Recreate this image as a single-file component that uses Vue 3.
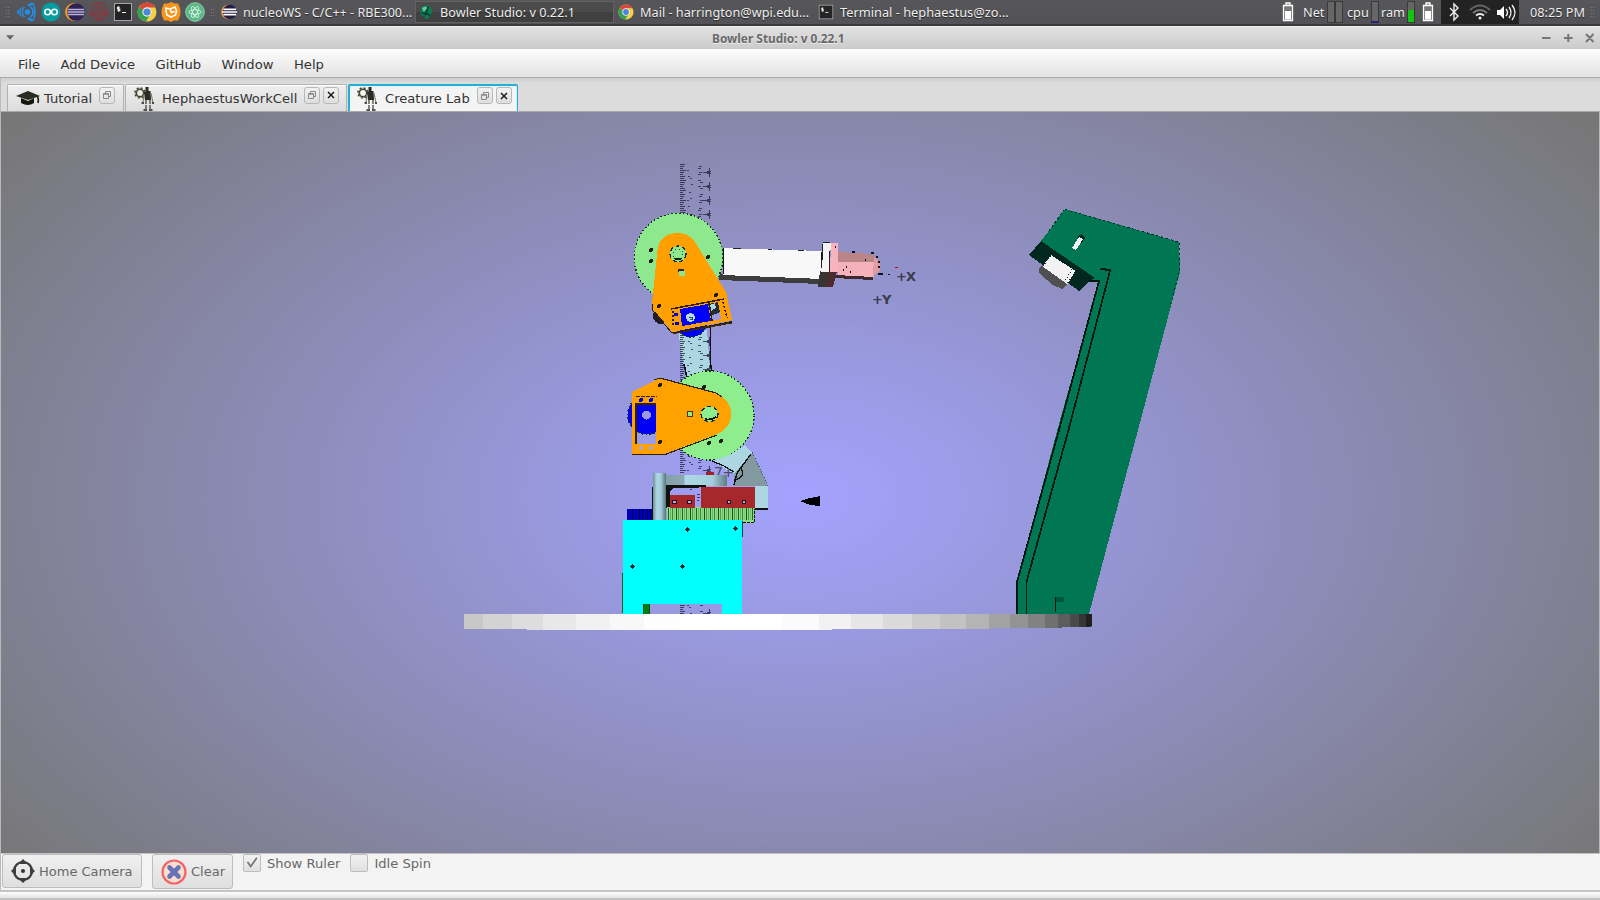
<script setup>
const tasks = [
  { label: 'nucleoWS - C/C++ - RBE300...', icon: 'eclipse' },
  { label: 'Bowler Studio: v 0.22.1', icon: 'bowler', active: true },
  { label: 'Mail - harrington@wpi.edu...', icon: 'chrome' },
  { label: 'Terminal - hephaestus@zo...', icon: 'term' }
]
const menus = ['File', 'Add Device', 'GitHub', 'Window', 'Help']
const tabs = [
  { label: 'Tutorial', w: 117, icon: 'cap' },
  { label: 'HephaestusWorkCell', w: 222, icon: 'robot', close: true },
  { label: 'Creature Lab', w: 170, icon: 'robot', close: true, active: true }
]
const edges = [464, 483, 512, 543, 576, 610, 644, 680, 715, 749, 782, 819, 851, 883, 912, 940, 966, 989, 1010, 1028, 1045, 1058, 1070, 1079, 1086, 1092]
const shades = [200, 211, 221, 232, 241, 248, 253, 255, 255, 255, 251, 242, 230, 218, 205, 194, 180, 163, 147, 130, 112, 93, 74, 54, 32]
const disc = shades.map((s, i) => ({ x: edges[i], w: edges[i + 1] - edges[i], fill: `rgb(${s},${s},${s})` }))
function ruler(y0, y1) {
  let fine = '', mid = '', major = ''
  for (let y = y0; y < y1; y += 2) {
    fine += `M680 ${y}h${y % 10 === 0 ? 6 : 3 + (y % 3)}`
    if ((y * 7) % 11 < 4) mid += `M${687 + (y % 5)} ${y}h2`
    if ((y * 5) % 14 < 7) mid += `M${698 + (y % 3)} ${y}h3`
  }
  for (let y = y0 + 8; y < y1; y += 14) major += `M703 ${y}h7M707 ${y + 1}h4M707 ${y - 1}h4M709.500 ${y - 4}v9`
  return { fine, mid, major }
}
const rulers = [ruler(164, 222), ruler(333, 382), ruler(448, 474), ruler(605, 614)]
const teeth = Array.from({ length: 44 }, (_, i) => ({ x: 668 + i * 2, w: 1, o: [0.8, 0.25, 0.6, 0.1, 0.9, 0.45, 0.2][i % 7] }))
const holes = [[651, 250], [651, 261], [708, 257], [716, 295], [659, 306], [660, 385], [660, 442], [709, 443], [721, 441], [704, 387]]
const cyanHoles = [[687, 529], [735, 528], [632, 566], [682, 566]]
</script>

<template>
  <div class="desktop">
    <svg class="defs" width="0" height="0" aria-hidden="true">
      <symbol id="eclipse" viewBox="0 0 20 20">
        <circle cx="9" cy="10" r="9" fill="#f09a26" /><circle cx="11" cy="10" r="8.8" fill="#2c2255" />
        <path d="M3 7.5h16M2.5 10h17M3 12.5h16" stroke="#b9b4d8" stroke-width="1.6" />
      </symbol>
      <symbol id="eclipse-task" viewBox="0 0 20 20">
        <circle cx="9" cy="10" r="9" fill="#e59a3c" /><circle cx="11" cy="10" r="9" fill="#231c44" />
        <path d="M3 6.700h16M1.500 10h18.500M3 13.300h16" stroke="#fff" stroke-width="2" />
      </symbol>
      <symbol id="chrome" viewBox="0 0 20 20">
        <circle cx="10" cy="10" r="9.5" fill="#f7cf46" />
        <path d="M10 10L1.8 5.2A9.5 9.5 0 0 1 18.3 5.4H10Z" fill="#d9473a" />
        <path d="M10 10L1.8 5.2A9.5 9.5 0 0 0 9 19.5L13.5 12Z" fill="#35a055" />
        <circle cx="10" cy="10" r="4.7" fill="#eee" /><circle cx="10" cy="10" r="3.6" fill="#4a87dc" />
      </symbol>
      <symbol id="term" viewBox="0 0 20 20">
        <rect x="1.5" y="1.5" width="17" height="17" fill="#242424" stroke="#a5a5a5" />
        <path d="M6.8 5.3H4.5v1.7h2.3v1.7H4.3M5.6 4.3v5.4M9 10.5h4" fill="none" stroke="#eee" stroke-width="1.1" />
      </symbol>
      <symbol id="bowler" viewBox="0 0 20 20">
        <path d="M4 4Q12-2 17 6Q19 13 11 19L8 18L9 14L5 15Q2 10 4 4Z" fill="#087c57" />
        <path d="M5 5Q10 1 12 5L7 10Z" fill="#67c69a" /><path d="M13 3L10 12L15 14M5 11L10 13" stroke="#063d31" stroke-width="2" fill="none" />
      </symbol>
      <symbol id="cap" viewBox="0 0 24 18">
        <path d="M0 7L12 2L24 7L12 11Z" fill="#292c20" /><path d="M5 9v5q7 4 13 0V9l-6 3Z" fill="#15170f" /><path d="M21 7q2 2 1 7" stroke="#15170f" stroke-width="1.6" fill="none" />
      </symbol>
      <symbol id="robot" viewBox="0 0 20 25">
        <circle cx="6" cy="7" r="3.7" fill="none" stroke="#46452e" stroke-width="1.6" />
        <circle cx="6" cy="7" r="5.1" fill="none" stroke="#46452e" stroke-width="1.5" stroke-dasharray="2 2" />
        <path d="M11.500 1h3v4h2l.5 9h-6l-1-8h1.500z" fill="#292b25" /><path d="M10 8l-1 9M17 7l2 10" stroke="#777" stroke-width="1.1" />
        <path d="M12 14v9M16 14v9" stroke="#34352f" stroke-width="1.2" stroke-dasharray="4 1" /><path d="M9.500 24h3.500M15 24h3.500M7.500 17h2.500M18 17h2" stroke="#222" stroke-width="1.4" />
      </symbol>
      <symbol id="battery" viewBox="0 0 12 20">
        <path d="M4 3V1h4v2M1.500 3.500h9v15h-9z" fill="#777" stroke="#fff" stroke-width="1.3" /><rect x="3" y="9" width="6" height="8.500" fill="#fff" />
      </symbol>
    </svg>

    <header class="panel">
      <i class="grip"></i>
      <div class="launch">
        <svg viewBox="0 0 20 20"><circle cx="10.500" cy="10" r="2.800" fill="#258be5" /><path d="M7.500 5a6 6 0 0 1 0 10" transform="translate(6 0)" fill="none" stroke="#258be5" stroke-width="1.800" /><path d="M11 3.500L16 1.500M11 16.500l5 2" stroke="#258be5" stroke-width="2.600" /><path d="M7.500 4.500Q3 10 7.500 15.500M4 5.500Q1.500 10 4 14.500M1 8v4M16.500 2q3 8 0 16" fill="none" stroke="#258be5" stroke-width="1.500" /></svg>
        <svg viewBox="0 0 20 20"><circle cx="10" cy="10" r="9.5" fill="#079ba2" /><circle cx="6.600" cy="10" r="2.800" fill="none" stroke="#fff" stroke-width="1.500" /><circle cx="13.400" cy="10" r="2.800" fill="none" stroke="#fff" stroke-width="1.500" /></svg>
        <svg><use href="#eclipse" /></svg>
        <svg viewBox="0 0 20 20"><path d="M4 11V3q6-4 12 0v8M1 10q9 5 18 0q-1 4-4 3v3l-5 3-5-3v-3q-3 1-4-3M7 16h6" fill="none" stroke="#8d363c" stroke-width="1.300" /><circle cx="10" cy="7" r="2.700" fill="none" stroke="#8d363c" stroke-width="2" stroke-dasharray="2 1" /></svg>
        <svg><use href="#term" /></svg>
        <svg><use href="#chrome" /></svg>
        <svg viewBox="0 0 20 20"><path d="M10 0l3.500 1.500H17L19 6l.5 4-.5 4-2 4.500h-4L10 20l-3-1.500H3L1 14l-.5-4L1 6l2-4.500h4z" fill="#f7941d" /><path d="M5 6l4 1 5-2 1.500 4-1 4-4.500 2-4-2-1-4zM9 7l1.500 3.500 3-1" fill="none" stroke="#fff" stroke-width="1.600" /></svg>
        <svg viewBox="0 0 20 20"><circle cx="10" cy="10" r="9.300" fill="#5ab887" stroke="#8ad2aa" /><g fill="none" stroke="#d9f4e5" stroke-width=".9"><ellipse cx="10" cy="10" rx="6" ry="2.300" /><ellipse cx="10" cy="10" rx="6" ry="2.300" transform="rotate(60 10 10)" /><ellipse cx="10" cy="10" rx="6" ry="2.300" transform="rotate(120 10 10)" /></g></svg>
      </div>
      <i class="grip small"></i>
      <div class="tasks">
        <div v-for="t in tasks" :key="t.label" class="task" :class="{ active: t.active }">
          <svg><use :href="t.icon === 'eclipse' ? '#eclipse-task' : '#' + t.icon" /></svg><span>{{ t.label }}</span>
        </div>
      </div>
      <div class="monitor">
        <svg class="bat"><use href="#battery" /></svg>
        <span class="net">Net</span><i class="bar"></i><i class="bar"></i>
        <span class="cpu">cpu</span><i class="bar cpubar"></i>
        <span class="ram">ram</span><i class="bar rambar"></i>
        <svg class="bat last"><use href="#battery" /></svg>
      </div>
      <div class="tray">
        <svg width="78" height="25" viewBox="0 0 78 25" fill="none" stroke="#eee">
          <path d="M9 8l8 8-4 4V4l4 4-8 8" stroke-width="1.400" />
          <path d="M29 10q10-9 20 0" stroke="#666" stroke-width="2" /><path d="M32 13q7-6 14 0" stroke="#777" stroke-width="2" /><path d="M35 15.500q4-3 8 0" stroke-width="2" /><circle cx="39" cy="18" r="1.500" fill="#eee" stroke="none" />
          <path d="M56 10h3l4-4v13l-4-4h-3z" fill="#fff" stroke="none" /><path d="M65 9q3 3.500 0 7M68 7q4 5.500 0 11M71 5q6 7.500 0 15" stroke-width="1.400" />
        </svg>
      </div>
      <span class="clock">08:25 PM</span><i class="grip end"></i>
    </header>

    <div class="titlebar">
      <svg class="tri" viewBox="0 0 10 6"><path d="M0 0h9L4.500 5z" fill="#666" /></svg>
      <strong>Bowler Studio: v 0.22.1</strong>
      <svg class="winbtns" viewBox="0 0 56 12" stroke="#777" stroke-width="2"><path d="M1 6h8.500M23 6h8.500M27.300 2v8M45 2l7.500 8M52.500 2L45 10" /></svg>
    </div>

    <nav class="menubar"><span v-for="m in menus" :key="m">{{ m }}</span></nav>

    <div class="tabbar">
      <div v-for="t in tabs" :key="t.label" class="tab" :class="[t.icon, { active: t.active }]" :style="{ width: t.w + 'px' }">
        <svg class="ticon"><use :href="'#' + t.icon" /></svg>
        <span>{{ t.label }}</span>
        <b class="tbtn"><svg viewBox="0 0 8 8" fill="none" stroke="#888"><path d="M.5 2.500h5v5h-5zM2.500 2.500v-2h5v5h-2" /><path d="M.5 3.200h5" /></svg></b>
        <b v-if="t.close" class="tbtn"><svg viewBox="0 0 8 8" stroke="#111" stroke-width="1.400"><path d="M1 1l6 6M7 1L1 7" /></svg></b>
      </div>
    </div>

    <main class="view">
      <svg width="1598" height="741" viewBox="1 112 1598 741" shape-rendering="crispEdges">
        <defs>
          <linearGradient id="col"><stop offset="0" stop-color="#718f98" /><stop offset=".3" stop-color="#acd8e5" /><stop offset=".6" stop-color="#a5cdda" /><stop offset="1" stop-color="#58747b" /></linearGradient>
          <linearGradient id="beam"><stop offset="0" stop-color="#7c98a1" /><stop offset=".42" stop-color="#8da9b1" /><stop offset=".43" stop-color="#acd8e5" /><stop offset=".8" stop-color="#a6d0dd" /><stop offset="1" stop-color="#607c84" /></linearGradient>
          <clipPath id="rim"><path d="M464 614H1092V626L1090 627H1062V628H992V629H832V630H527V629H464Z" /></clipPath>
        </defs>
        <!-- upper and lower links -->
        <path d="M678 330H707L710 370L712 376L688 380L683 363Z" fill="#acd6e2" />
        <path d="M710.500 326v38l2 10M684 364l3 14" stroke="#111" stroke-width="1.600" fill="none" />
        <g v-for="(r, i) in rulers" :key="i" fill="none" stroke="#1d1d38">
          <path :d="r.fine" opacity=".75" /><path :d="r.mid" opacity=".7" /><path :d="r.major" opacity=".75" />
        </g>
        <!-- wrist assembly -->
        <path d="M719 274L821 279V284L719 280Z" fill="#3d3d3d" />
        <path d="M723 248L822 251V279L723 275Z" fill="#f8f8f8" /><path d="M723.500 248v26M821 252v26" stroke="#111" />
        <path d="M733 248.500h8M768 249.500h4M798 250.500h6" stroke="#222" />
        <path d="M820 271H837L833 287H818Z" fill="#393434" /><path d="M829 271H837L833 287H825Z" fill="#4b2b30" />
        <path d="M823 243H831L829 272H821Z" fill="#f4f4f4" /><path d="M823 242.500h7M821.500 268L823 244M829.500 271v-20" stroke="#222" fill="none" /><path d="M831 243H838V272H830Z" fill="#f8b4be" />
        <path d="M838 252L873 254L876 263H838Z" fill="#b98587" /><path d="M838 262H874V277H838Z" fill="#f5b2bb" />
        <path d="M874 257L880 262V271L873 276Z" fill="#e09ca0" /><path d="M836 275L873 277V280L834 278Z" fill="#3e2a2e" />
        <path d="M852 252h3M871 253h3M865 260h1M846 267h1M843 270h1M850 272h1M835 247h1M876 257h2M879 261v2M879 266v2M878 274h5M888 274.500h2" stroke="#111" stroke-width="1.300" />
        <path d="M895 267.500h3" stroke="#d00" />
        <text x="896" y="280.500" class="axis">+X</text><text x="872" y="303.500" class="axis">+Y</text>
        <!-- elbow -->
        <circle cx="678.500" cy="257.500" r="44.500" fill="#8ee98e" /><circle cx="678.500" cy="257.500" r="44.300" class="cog" />
        <circle cx="661" cy="316" r="8" fill="#1d1d28" /><circle cx="691" cy="320" r="17" fill="#00f" /><circle cx="691" cy="320" r="17" class="cog" />
        <path d="M672 332.500L732 321v2.500L674 334Z" fill="#3e2800" />
        <path d="M657.500 250Q660 233 678 233Q691 233 698 247L726 292L732 320L672.500 332L652 308V303Z" fill="#ffa000" />
        <path d="M652 304V310L672 333L731 322" stroke="#312000" fill="none" />
        <path d="M680 309L708 304L711 321L682 326Z" fill="#00f" /><path d="M708 304L718 302L720 312L711 316Z" fill="#222d35" /><path d="M711 316L720 312L721 319L711 321Z" fill="#9a99df" /><path d="M710 305l5-2 1 5-5 3z" fill="#acd6e2" />
        <path d="M671 309L724 299M709 302L712 321" stroke="#312000" stroke-width="1.500" /><path d="M673 325V311M723 302l4 16" stroke="#312000" stroke-width="1.500" stroke-dasharray="2 2" />
        <path d="M674 314h4M675 323h4" stroke="#0000c8" stroke-width="3" />
        <circle cx="690.500" cy="317.500" r="4.500" fill="#b7dce7" /><path d="M689 317h3v2h-2" stroke="#345" fill="none" />
        <circle cx="678" cy="254" r="8" fill="#8ee98e" /><circle cx="678" cy="254" r="8" class="ring" /><circle cx="678" cy="254" r="5" class="ring thin" /><path d="M674 259q4 3 8 0v-1h-8z" fill="#182018" />
        <path d="M678 269h6v3h-6z" fill="#342400" /><path d="M679 271h6v5h-6z" fill="#8ee98e" />
        <!-- shoulder -->
        <circle cx="709.500" cy="415.500" r="44.500" fill="#8eee8e" /><circle cx="709.500" cy="415.500" r="44.500" class="cog" />
        <circle cx="647" cy="415" r="19.500" fill="#0000f4" /><circle cx="647" cy="415" r="19.500" class="cog" />
        <path fill-rule="evenodd" d="M660.500 378L632 392V454H664L717 434Q731 428 731 414Q731 400 716 393ZM636 404H656V444H636Z" fill="#ffa200" />
        <path d="M632 454.500H665L717 435M654 380l6-2 56 15 6 4M636 444v-40h20" stroke="#342100" fill="none" stroke-width="1.200" />
        <circle cx="646.500" cy="415" r="4.500" fill="#9b99e4" /><path d="M636 396.500h21" stroke="#342100" stroke-dasharray="4 1" />
        <g fill="#0000d0"><circle cx="641" cy="400" r="2" /><circle cx="651" cy="400" r="2" /></g><g fill="#b4a9c8"><circle cx="641" cy="448" r="2" /><circle cx="651" cy="448" r="2" /></g>
        <ellipse cx="709.500" cy="414" rx="8.500" ry="7.500" fill="#8eee8e" /><ellipse cx="709.500" cy="414" rx="8.500" ry="7.500" class="ring" /><path d="M705 418q5 2 11-2v2q-5 3-11 2z" fill="#111" />
        <path d="M687.500 411.500h5v5h-5z" fill="#8eee8e" stroke="#493500" />
        <circle v-for="(h, i) in holes" :key="'h' + i" :cx="h[0]" :cy="h[1]" r="2" fill="#221b10" />
        <!-- bracket -->
        <path d="M712 460.500Q726 458 737 450L745 445L752 453L735 475Z" fill="#acd6e2" /><path d="M752.500 452.500L768 486H734V474Z" fill="#82999f" />
        <path d="M712 461l12 5 10 6M751 454l-14 19-3 12M734 480q8-1 9-7l-2-5" stroke="#111" fill="none" stroke-width="1.300" /><path d="M752.500 452.500L768 486" stroke="#456" stroke-dasharray="1 2" />
        <text x="714" y="476.500" class="zax">7+</text>
        <!-- rotating base -->
        <path d="M755 486H768V508H755Z" fill="#acd6e2" /><path d="M755 509H768" stroke="#111" stroke-width="2" />
        <path d="M706 472h8v4h-8z" fill="#9f2028" /><path d="M653 475H727V486H653Z" fill="url(#beam)" />
        <path d="M666 485h40v2l-15 1h-17l-4 3v17h-5z" fill="#111" /><path d="M653 473H666V520H653Z" fill="url(#col)" /><path d="M652.500 487v33" stroke="#111" />
        <path d="M697 494h3M697 497h3M697 500h2M690 489h2" stroke="#3a3a60" />
        <path d="M627 509H652V520H627Z" fill="#0000b8" /><path d="M632.500 509v11M639 509v11M642 509v11M647 509v11M650 509v11" stroke="#00003b" />
        <path d="M667 507H755V523H743V520H667Z" fill="#86df83" /><rect v-for="t in teeth" :key="t.x" :x="t.x" y="508" :width="t.w" height="12" fill="#1a3a14" :fill-opacity="t.o" />
        <path d="M743 522.500h11v-14" stroke="#111" fill="none" stroke-dasharray="3 1" />
        <path d="M670 495H695V508H670ZM701 487H755V508H701Z" fill="#a7282a" />
        <g fill="#b0a8df" stroke="#2b101b"><circle cx="674.500" cy="502" r="2" /><circle cx="689.500" cy="502" r="2" /><circle cx="729" cy="502" r="1.800" /><circle cx="744" cy="502" r="1.800" /></g>
        <path d="M643 604h6v10h-6z" fill="#087b08" /><path d="M643.500 604v10M649 604v10M742.500 521v16M622.500 573v40" stroke="#052" />
        <path d="M623 520H742V614H722V604H643V614H623Z" fill="#0ff" />
        <path v-for="(h, i) in cyanHoles" :key="'c' + i" :d="`M${h[0] - 2} ${h[1]}h5v1h-5zM${h[0]} ${h[1] - 2}h1v5h-1zM${h[0] - 1} ${h[1] - 1}h3v3h-3z`" fill="#05282b" />
        <path d="M800 501l10-3 10-2v10l-10-1z" fill="#000" />
        <!-- camera stand -->
        <path d="M1041 241L1051 228L1065 209L1179 242L1180 272L1138 430L1089 614H1016.500V582L1060 420L1099 282L1089 281Z" fill="#007653" />
        <path d="M1065 209.500L1179 242V272L1170 307M1049 231l15-21" stroke="#002e22" fill="none" stroke-dasharray="2 3" />
        <path d="M1029 255L1041 241L1095 278L1089 281L1079 291Z" fill="#01281e" />
        <path d="M1089 281H1099L1059 430L1017 582V614M1110.500 269L1068.500 430L1026.500 582V614" fill="none" stroke="#00190f" stroke-width="1.800" /><path d="M1099 270l2-2 10 1v2z" fill="#00190f" />
        <path d="M1039 268L1043 266L1067 284L1062 289L1039 273Z" fill="#505050" /><path d="M1051 255L1075.500 271L1067 285L1042 267Z" fill="#f2f2f2" />
        <path d="M1039 268L1042 266L1067 284L1062 289L1053 285L1040 274Z" fill="#505050" />
        <path d="M1051 256l-8 10M1075 272l-8 12M1072 269l-7 12" stroke="#222" stroke-dasharray="1 2" />
        <path d="M1078 236l4-2 3 4-3 5-4-3z" fill="#002c20" /><path d="M1081 238L1074 249" stroke="#f2f2f2" stroke-width="4.500" />
        <path d="M1055 597h9v5h-9z" fill="#00553d" /><path d="M1055.500 597v15" stroke="#00180e" />
        <g clip-path="url(#rim)"><rect v-for="d in disc" :key="d.x" :x="d.x" y="614" :width="d.w" height="16" :fill="d.fill" /></g>
      </svg>
    </main>

    <footer class="controls">
      <button class="home"><svg width="24" height="24" viewBox="0 0 24 24"><circle cx="12" cy="12" r="9" fill="none" stroke="#3d3d3d" stroke-width="2.200" /><circle cx="12" cy="12" r="2" fill="#333" /><path d="M12 0l3 3v2H9V3zM12 24l3-3v-2H9v2zM0 12l3-3h2v6H3zM24 12l-3-3h-2v6h2z" fill="#3d3d3d" /></svg>Home Camera</button>
      <button class="clear"><svg width="26" height="26" viewBox="0 0 26 26"><circle cx="13" cy="13" r="11.500" fill="#fbdccf" stroke="#f36468" stroke-width="2.200" /><path d="M8.500 8.500l9 9M17.500 8.500l-9 9" stroke="#6675b7" stroke-width="4.600" stroke-linecap="round" /></svg>Clear</button>
      <label class="ruler"><i><svg viewBox="0 0 18 18"><path d="M4 8l3.500 5L14.500 3" fill="none" stroke="#777" stroke-width="2" /></svg></i>Show Ruler</label>
      <label class="spin"><i></i>Idle Spin</label>
    </footer>
    <div class="bottom"></div>
  </div>
</template>

<style>
body { margin: 0; overflow: hidden; }
</style>

<style scoped>
.desktop { width: 1600px; height: 900px; display: flex; flex-direction: column; background: #dcdcdc; font-family: "DejaVu Sans", sans-serif; font-size: 13px; color: #333; overflow: hidden; white-space: nowrap; }
.defs { position: absolute; }
svg { display: block; flex: none; }
.panel { box-sizing: border-box; height: 26px; flex: none; display: flex; align-items: center; background: linear-gradient(#57575a, #535256 90%); border-bottom: 2px solid #39393b; color: #eee; font-family: "Noto Sans", sans-serif; font-size: 12.7px; text-shadow: 0 1px 1px #222; }
.grip { width: 5px; height: 12px; margin-left: 5px; background: radial-gradient(circle, #858585 35%, transparent 40%) 0 0 / 2.5px 3px; }
.launch { display: flex; gap: 4px; margin-left: 7px; }
.launch svg { width: 20px; height: 20px; }
.grip.small { margin-left: 5px; height: 9px; }
.tasks { display: flex; margin-left: 3px; }
.task { box-sizing: border-box; width: 200px; height: 22px; display: flex; align-items: center; padding-left: 3px; gap: 6px; }
.task:first-child { width: 197px; font-size: 12.6px; }
.task:nth-child(2) { width: 199px; padding-left: 2px; }
.task:nth-child(3), .task:nth-child(4) { padding-left: 4px; }
.task:nth-child(4) { font-size: 12.8px; }
.task svg { width: 16px; height: 16px; }
.task.active { background: linear-gradient(#4b4b4b 50%, #404040 50%); border: 1px solid #626262; }
.monitor { display: flex; align-items: center; margin-left: auto; }
.bat { width: 12px; height: 20px; }
.net { width: 24px; margin-left: 9px; }
.bar { box-sizing: border-box; width: 8px; height: 22px; border: 1px solid #393939; background: #666; }
.cpu { margin-left: 4px; width: 24px; }
.cpubar { border-bottom: 2px solid #22227a; }
.ram { margin-left: 2px; width: 26px; }
.rambar { background: linear-gradient(#666 40%, #12c512 40%); }
.bat.last { margin: 0 7px 0 7px; }
.tray { background: #222; height: 24px; width: 78px; }
.clock { width: 56px; margin-left: 11px; }
.grip.end { margin: 0 5px 0 4px; }
.titlebar { box-sizing: border-box; height: 23px; flex: none; display: flex; align-items: center; border-top: 1px solid #f2f2f2; background: linear-gradient(#e1e1e1, #cbcbcb); color: #696969; font-family: "Noto Sans", sans-serif; font-size: 11.9px; text-shadow: 0 1px #eee; }
.tri { width: 9px; height: 6px; margin-left: 6px; }
.titlebar strong { margin-left: 697px; width: 200px; }
.winbtns { width: 56px; height: 12px; margin-left: auto; margin-right: 3px; }
.menubar { box-sizing: border-box; height: 29px; flex: none; display: flex; align-items: center; padding: 2px 0 0 18px; gap: 20.5px; font-size: 13.15px; background: linear-gradient(#fdfdfd, #e3e3e3); border-bottom: 1px solid #aaa; }
.tabbar { box-sizing: border-box; height: 34px; flex: none; display: flex; align-items: flex-end; padding-left: 6px; gap: 1px; background: linear-gradient(#cecece, #dcdcdc 5px); border-bottom: 1px solid #aaa; border-left: 1px solid #bbb; font-size: 13.1px; }
.tab { box-sizing: border-box; height: 27px; display: flex; align-items: center; border: 1px solid #b2b2b2; border-bottom: 0; border-radius: 2px 2px 0 0; background: linear-gradient(#efefef, #dcdcdc); box-shadow: inset 0 1px #fff; padding-left: 8px; }
.tab span { margin-right: 7px; }
.ticon { width: 24px; height: 18px; margin-right: 4px; }
.robot .ticon { width: 20px; height: 25px; margin-right: 8px; }
.tab.active { border: 2px solid #24aed5; border-width: 2px 1px 0 2px; background: linear-gradient(#e6f4f8, #f4f4f4 4px); padding-left: 7px; box-shadow: inset -1px 0 #cfeaf3; }
.tbtn { box-sizing: border-box; width: 16px; height: 17px; margin: -6px 3px 0 0; border: 1px solid #b8b8b8; border-radius: 3px; background: linear-gradient(#f2f2f2, #dedede); display: flex; align-items: center; justify-content: center; }
.tbtn svg { width: 8px; height: 8px; }
.view { height: 741px; flex: none; border-left: 1px solid #b8b8b8; border-right: 1px solid #b8b8b8; width: 1598px; background: radial-gradient(1000px 610px at 800px 385px, #a3a3ff, #777777); }
.cog { fill: none; stroke: #17361a; stroke-width: 1.4; stroke-dasharray: 1.5 2.3; }
.ring { fill: none; stroke: #1d2b16; stroke-width: 1.2; stroke-dasharray: 4 3; }
.ring.thin { stroke-width: .8; stroke-dasharray: 1 3; }
.axis { font: bold 13px "DejaVu Sans", sans-serif; fill: #3b3b4c; letter-spacing: -1px; }
.zax { font: 14px "DejaVu Sans", sans-serif; fill: #494960; letter-spacing: -.5px; }
.controls { box-sizing: border-box; height: 37px; flex: none; display: flex; align-items: flex-start; background: #f3f3f3; border-left: 1px solid #bbb; border-top: 1px solid #c2c2c2; padding-left: 1px; color: #686868; }
button { box-sizing: border-box; height: 34px; padding: 0; display: flex; align-items: center; border: 1px solid #bdbdbd; border-radius: 3px; background: linear-gradient(#f0f0f0, #dfdfdf); font: 13px "DejaVu Sans", sans-serif; color: #686868; }
.home { width: 140px; padding-left: 8px; gap: 4px; }
.clear { width: 81px; height: 35px; margin-left: 10px; padding-left: 8px; gap: 4px; }
label { display: flex; align-items: center; gap: 6px; font-size: 13.1px; }
label i { box-sizing: border-box; width: 18px; height: 18px; border: 1px solid #bdbdbd; border-radius: 2px; background: linear-gradient(#f2f2f2, #e0e0e0); }
label i svg { width: 16px; height: 16px; }
.ruler { margin-left: 10px; }
.spin { margin-left: 10px; }
.bottom { box-sizing: border-box; height: 10px; flex: none; border-top: 2px solid #c4c4c4; border-bottom: 2px solid #c4c4c4; background: linear-gradient(#fff, #e2e2e2); }
</style>
